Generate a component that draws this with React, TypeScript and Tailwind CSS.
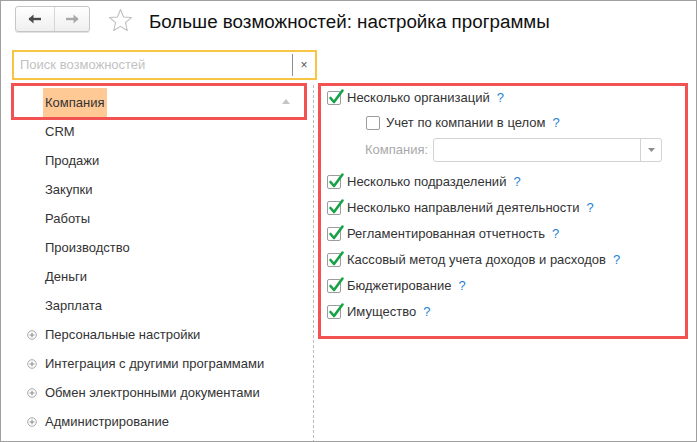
import React from 'react';

const font = { fontFamily: '"Liberation Sans", Arial, sans-serif' };

const sections = ['CRM', 'Продажи', 'Закупки', 'Работы', 'Производство', 'Деньги', 'Зарплата'];
const groups = [
  'Персональные настройки',
  'Интеграция с другими программами',
  'Обмен электронными документами',
  'Администрирование',
];

function Checkbox({ checked }: { checked: boolean }) {
  return (
    <div className="relative w-[14px] h-[14px] shrink-0 rounded-[2px] border border-[#9c9c9c] bg-white">
      {checked && (
        <svg className="absolute -left-[1px] -top-[5px] w-[19px] h-[19px]" viewBox="0 0 19 19">
          <path d="M3.5 11 L7 15 L15.5 3.5" fill="none" stroke="#17a247" strokeWidth="2.6" strokeLinecap="round" strokeLinejoin="round" />
        </svg>
      )}
    </div>
  );
}

function Option({ label, checked = true, indent = false, h = 'h-[26px]' }: { label: string; checked?: boolean; indent?: boolean; h?: string }) {
  return (
    <div className={`flex items-center ${h} ${indent ? 'pl-[45px]' : 'pl-[6px]'}`}>
      <Checkbox checked={checked} />
      <span className="ml-[6px] text-[13px] text-[#333]">{label}</span>
      <span className="ml-[7px] text-[13px] text-[#1e7fd4]">?</span>
    </div>
  );
}

function PlusIcon() {
  return (
    <svg width="10" height="10" viewBox="0 0 10 10">
      <circle cx="5" cy="5" r="4.3" fill="white" stroke="#a8a8a8" strokeWidth="1" />
      <path d="M2.6 5 H7.4 M5 2.6 V7.4" stroke="#8a8a8a" strokeWidth="1" />
    </svg>
  );
}

export default function App() {
  return (
    <div className="w-[700px] h-[442px] bg-white" style={font}>
      <div className="w-[697px] h-[442px] border border-[#a0a0a0] overflow-hidden">
        {/* header */}
        <div className="h-[49px] flex items-start pt-[5px] pl-[14px]">
          <div className="flex h-[26px] rounded-[3px] border border-[#c6c6c6] bg-gradient-to-b from-white to-[#efefef] shadow-[0_1px_0_#e2e2e2]">
            <div className="w-[38px] flex items-center justify-center">
              <svg width="14" height="10" viewBox="0 0 14 10">
                <path d="M1 5 H13" stroke="#4a4a4a" strokeWidth="2.4" />
                <path d="M0.5 5 L5.5 0.5 V9.5 Z" fill="#4a4a4a" />
              </svg>
            </div>
            <div className="w-[35px] flex items-center justify-center border-l border-[#d6d6d6]">
              <svg width="14" height="10" viewBox="0 0 14 10">
                <path d="M1 5 H13" stroke="#a9a9a9" strokeWidth="2.4" />
                <path d="M13.5 5 L8.5 0.5 V9.5 Z" fill="#a9a9a9" />
              </svg>
            </div>
          </div>
          <svg className="ml-[18px] mt-[2px]" width="25" height="25" viewBox="0 0 24 24">
            <path
              d="M12 1.5 L14.9 8.6 L22.5 9.2 L16.7 14.1 L18.5 21.6 L12 17.6 L5.5 21.6 L7.3 14.1 L1.5 9.2 L9.1 8.6 Z"
              fill="none"
              stroke="#bdbdbd"
              strokeWidth="1"
              strokeLinejoin="round"
            />
          </svg>
          <div className="ml-[16px] mt-[4px] text-[18.8px] leading-[24px] text-[#111]">
            Больше возможностей: настройка программы
          </div>
        </div>

        {/* search */}
        <div className="ml-[11px] w-[305px] h-[30px] border-2 border-[#f7c443] flex items-center">
          <span className="pl-[6px] flex-1 text-[13px] text-[#c2c2c2]">Поиск возможностей</span>
          <div className="w-px h-[22px] bg-[#8e8e8e]" />
          <span className="w-[22px] text-center text-[12px] text-[#555]">×</span>
        </div>

        {/* body */}
        <div className="mt-[3px] flex h-[360px]">
          <div className="w-[312px] shrink-0">
            <div className="ml-[10px] w-[296px] h-[37px] border-[3px] border-[#f25252] flex pt-[2px]">
              <div className="ml-[29px] h-[29px] px-[2px] bg-[#ffc995] flex items-center text-[13px] text-[#333]">
                Компания
              </div>
              <svg className="ml-auto mr-[14px] mt-[11px]" width="8" height="5" viewBox="0 0 8 5">
                <path d="M0 5 L4 0 L8 5 Z" fill="#c4c4c4" />
              </svg>
            </div>
            <div className="-mt-[3px]">
              {sections.map((s) => (
                <div key={s} className="h-[29px] flex items-center pl-[44px] text-[13px] text-[#333]">
                  {s}
                </div>
              ))}
              {groups.map((g) => (
                <div key={g} className="h-[29px] flex items-center pl-[26px] text-[13px] text-[#333]">
                  <div className="w-[18px] flex items-center">
                    <PlusIcon />
                  </div>
                  {g}
                </div>
              ))}
            </div>
          </div>

          <div className="mt-[2px] border-l border-dashed border-[#bcbcbc]" />

          <div className="ml-[4px] w-[370px] h-[256px] border-[3px] border-[#f25252]">
            <Option label="Несколько организаций" h="h-[24px]" />
            <Option label="Учет по компании в целом" checked={false} indent h="h-[25px]" />
            <div className="h-[29px] flex items-center pl-[44px]">
              <span className="w-[68px] text-[13px] text-[#a9a9a9]">Компания:</span>
              <div className="w-[229px] h-[24px] rounded-[3px] border border-[#d2d2d2] flex">
                <div className="flex-1" />
                <div className="w-[21px] border-l border-[#d2d2d2] flex items-center justify-center">
                  <svg width="7" height="4" viewBox="0 0 7 4">
                    <path d="M0 0 L7 0 L3.5 4 Z" fill="#8c8c8c" />
                  </svg>
                </div>
              </div>
            </div>
            <div className="mt-[5px]">
              <Option label="Несколько подразделений" />
              <Option label="Несколько направлений деятельности" />
              <Option label="Регламентированная отчетность" />
              <Option label="Кассовый метод учета доходов и расходов" />
              <Option label="Бюджетирование" />
              <Option label="Имущество" />
            </div>
          </div>
        </div>
      </div>
    </div>
  );
}
